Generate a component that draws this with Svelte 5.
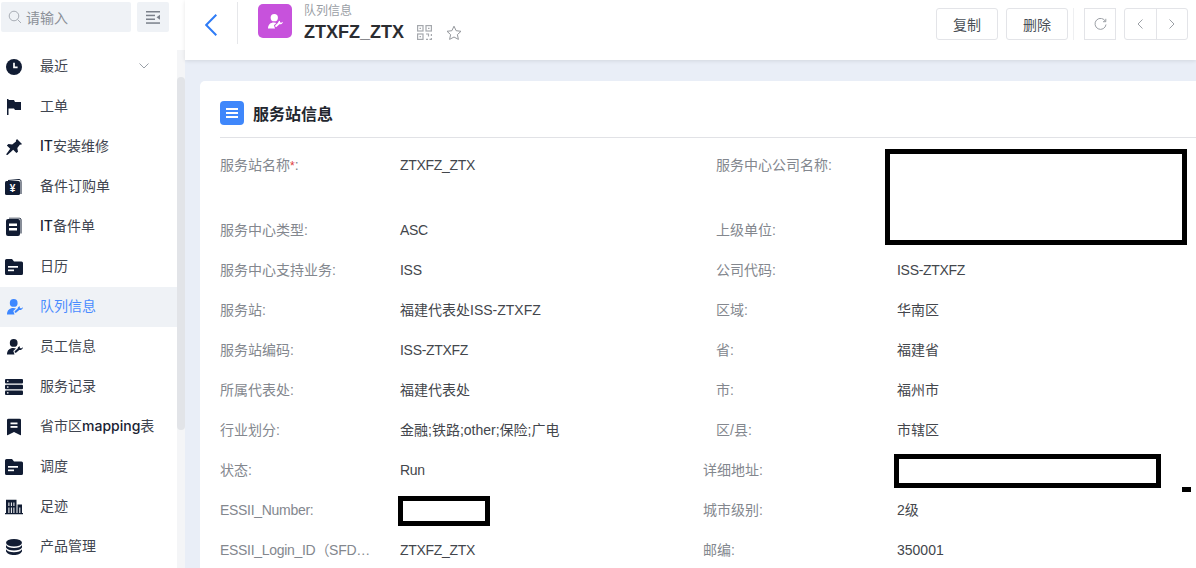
<script>
  const menu = [
    { label: '最近', icon: 'clock', arrow: true },
    { label: '工单', icon: 'flag' },
    { label: 'IT安装维修', icon: 'pin' },
    { label: '备件订购单', icon: 'yen' },
    { label: 'IT备件单', icon: 'book' },
    { label: '日历', icon: 'folder' },
    { label: '队列信息', icon: 'user', active: true },
    { label: '员工信息', icon: 'user' },
    { label: '服务记录', icon: 'server' },
    { label: '省市区mapping表', icon: 'bookmark' },
    { label: '调度', icon: 'folder' },
    { label: '足迹', icon: 'city' },
    { label: '产品管理', icon: 'db' }
  ];

  const rows = [
    { tall: true, l: '服务站名称', req: true, v: 'ZTXFZ_ZTX', r: '服务中心公司名称', rv: '' },
    { l: '服务中心类型', v: 'ASC', r: '上级单位', rv: '' },
    { l: '服务中心支持业务', v: 'ISS', r: '公司代码', rv: 'ISS-ZTXFZ' },
    { l: '服务站', v: '福建代表处ISS-ZTXFZ', r: '区域', rv: '华南区' },
    { l: '服务站编码', v: 'ISS-ZTXFZ', r: '省', rv: '福建省' },
    { l: '所属代表处', v: '福建代表处', r: '市', rv: '福州市' },
    { l: '行业划分', v: '金融;铁路;other;保险;广电', r: '区/县', rv: '市辖区' },
    { l: '状态', v: 'Run', r: '详细地址', rv: '', shift: true },
    { l: 'ESSII_Number', v: '', r: '城市级别', rv: '2级', shift: true },
    { l: 'ESSII_Login_ID（SFD…', plain: true, v: 'ZTXFZ_ZTX', r: '邮编', rv: '350001', shift: true }
  ];

  // latin runs in the menu sit darker than the CJK around them
  const parts = (label) => label.split(/([A-Za-z]+)/).filter(Boolean);
  const isLatin = (text) => /^[A-Za-z]/.test(text);
</script>

{#snippet userIcon(size)}
  <svg width={size} height={size} viewBox="0 0 16 16" fill="currentColor">
    <circle cx="6.700" cy="3.900" r="3.900" />
    <path d="M0 15.500c0-4.300 2.600-6.500 6.300-6.500 1 0 1.900.2 2.700.5L6.300 12l1.200 3.500z" />
    <path d="M16 8.200l-2 1.200-1.200-.7V7.200C11.700 7.300 10.800 8.200 10.700 9.400l-2.800 2.500c-.9.900.3 2.500 1.400 1.700l2.900-2.600c1.900.3 3.500-.8 3.800-2.800z" />
  </svg>
{/snippet}

{#snippet menuIcon(name)}
  {#if name === 'clock'}
    <svg width="16" height="16" viewBox="0 0 16 16"><circle cx="8" cy="8" r="8" fill="currentColor" /><path d="M8 3.800V8.400H11.600" fill="none" stroke="#fff" stroke-width="1.700" /></svg>
  {:else if name === 'flag'}
    <svg width="16" height="16" viewBox="0 0 16 16" fill="currentColor"><path d="M1 0h1.500v16H1zM2.500 1H8l1 2h6v8H9l-1-1.500H2.500z" /></svg>
  {:else if name === 'pin'}
    <svg width="17" height="17" viewBox="0 0 17 17" fill="currentColor"><path d="M11.500.5l5 5-1 .8-1-.2-2.700 3.400.7 3.700-1.600 1.400-3.200-3.300L2 16.500l-1.500-.5 4.200-5.700L1.300 7 3 5.400l3.700.7L10.500 3l-.1-1z" /></svg>
  {:else if name === 'yen'}
    <svg width="18" height="16" viewBox="0 0 18 16"><path d="M3 1.500 14 .5c1.500 0 2 .8 2 2V15" fill="none" stroke="currentColor" /><rect x="0" y="2" width="15" height="14" rx="1.500" fill="currentColor" /><text x="7.500" y="12.500" font-size="10" font-weight="700" font-family="Liberation Sans" fill="#fff" text-anchor="middle">¥</text></svg>
  {:else if name === 'book'}
    <svg width="16" height="19" viewBox="0 0 16 19"><path d="M3 .5h10c1.500 0 2 .8 2 2V16" fill="none" stroke="currentColor" /><rect x="0" y="1.500" width="14" height="17" rx="2" fill="currentColor" /><rect x="3" y="6" width="8" height="2.500" fill="#fff" /><rect x="3" y="10.500" width="8" height="2.500" fill="#fff" /></svg>
  {:else if name === 'folder'}
    <svg width="18" height="16" viewBox="0 0 18 16"><path d="M1.500 0H7l2 2.500h7.500A1.500 1.500 0 0 1 18 4v10.500a1.500 1.500 0 0 1-1.500 1.500h-15A1.500 1.500 0 0 1 0 14.500v-13A1.500 1.500 0 0 1 1.500 0z" fill="currentColor" /><rect x="3" y="7" width="10" height="1.700" fill="#fff" /><rect x="3" y="10.500" width="6" height="1.700" fill="#fff" /></svg>
  {:else if name === 'user'}
    {@render userIcon(16)}
  {:else if name === 'server'}
    <svg width="18" height="16" viewBox="0 0 18 16" fill="currentColor"><rect width="18" height="4.400" rx="1" /><rect y="5.800" width="18" height="4.400" rx="1" /><rect y="11.600" width="18" height="4.400" rx="1" /><g fill="#fff"><rect x="2" y="1.600" width="1.500" height="1.300" /><rect x="2" y="7.400" width="1.500" height="1.300" /><rect x="2" y="13.200" width="1.500" height="1.300" /></g></svg>
  {:else if name === 'bookmark'}
    <svg width="14" height="17" viewBox="0 0 14 17"><path d="M1.500 0h11A1.500 1.500 0 0 1 14 1.500V17l-7-3.500L0 17V1.500A1.500 1.500 0 0 1 1.500 0z" fill="currentColor" /><rect x="3.500" y="4" width="7" height="1.800" fill="#fff" /><rect x="3.500" y="7.500" width="7" height="1.800" fill="#fff" /></svg>
  {:else if name === 'city'}
    <svg width="18" height="15" viewBox="0 0 18 15"><path d="M1 0h10.500v14H1zM12.500 5H17v9h-4.500z" fill="currentColor" /><rect y="13.500" width="18" height="1.500" fill="currentColor" /><g fill="#fff"><rect x="3.400" y="3" width="1" height="3.500" /><rect x="5.900" y="3" width="1" height="3.500" /><rect x="8.400" y="3" width="1" height="3.500" /><rect x="3.400" y="8" width="1" height="5.500" /><rect x="5.900" y="8" width="1" height="5.500" /><rect x="8.400" y="8" width="1" height="5.500" /><rect x="14.300" y="8" width="1" height="5.500" /></g></svg>
  {:else if name === 'db'}
    <svg width="16" height="16" viewBox="0 0 16 16" fill="currentColor"><ellipse cx="8" cy="3.800" rx="8" ry="3.800" /><path d="M0 6c1 2 4 3 8 3s7-1 8-3v2.400c-.8 2-4 3-8 3s-7.200-1-8-3z" /><path d="M0 10.300c1 2 4 3 8 3s7-1 8-3v2c-.8 2.300-4 3.700-8 3.700s-7.200-1.400-8-3.700z" /></svg>
  {/if}
{/snippet}

<div class="page">
  <aside class="sidebar">
    <div class="search-row">
      <div class="search">
        <svg width="14" height="14" viewBox="0 0 14 14" fill="none" stroke="#a8adb5"><circle cx="6" cy="6" r="4.800" /><path d="M9.500 9.500l3.500 3.500" /></svg>
        <span>请输入</span>
      </div>
      <button class="collapse" aria-label="收起">
        <svg width="14" height="13" viewBox="0 0 14 13" fill="#7b808a"><rect width="14" height="1.500" /><rect y="3.700" width="9" height="1.500" /><rect y="7.500" width="9" height="1.500" /><rect y="11.300" width="14" height="1.500" /><path d="M14 3.800v5L10.500 6.300z" /></svg>
      </button>
    </div>
    <div class="menu-wrap">
      <nav class="menu">
        {#each menu as item}
          <div class="item" class:active={item.active}>
            <span class="icon" class:nudge={item.icon === 'user'}>{@render menuIcon(item.icon)}</span>
            <span class="label">
              {#each parts(item.label) as part}{#if isLatin(part)}<b>{part}</b>{:else}{part}{/if}{/each}
            </span>
            {#if item.arrow}
              <svg class="arrow" width="10" height="6" viewBox="0 0 10 6" fill="none" stroke="#9aa0a8"><path d="M.5.500 5 5 9.500.500" /></svg>
            {/if}
          </div>
        {/each}
      </nav>
      <div class="scrollbar"><div class="thumb"></div></div>
    </div>
  </aside>

  <main class="main">
    <header class="topbar">
      <button class="back" aria-label="返回">
        <svg width="12" height="22" viewBox="0 0 12 22" fill="none" stroke="#2f7cf6" stroke-width="2"><path d="M11.300 .7 1.200 11l10.100 10.300" /></svg>
      </button>
      <div class="divider"></div>
      <div class="app-icon">{@render userIcon(15)}</div>
      <div class="titles">
        <div class="crumb">队列信息</div>
        <div class="title-row">
          <span class="title">ZTXFZ_ZTX</span>
          <svg class="qr" width="15" height="15" viewBox="0 0 15 15" fill="none" stroke="#a5a8ad" stroke-width="1.200"><rect x=".6" y=".6" width="5.400" height="5.400" /><rect x="9" y=".6" width="5.400" height="5.400" /><rect x=".6" y="9" width="5.400" height="5.400" /><path d="M2.500 3.300h1.500M11 3.300h1.500M2.500 11.700h1.500M9 9h2.500v2.500M14.400 9v2M9 14.400h2M12.500 14.400h2V13" /></svg>
          <svg class="star" width="16" height="16" viewBox="0 0 16 16" fill="none" stroke="#94979c"><path d="M8 1.200l2.100 4.500 4.900.6-3.600 3.300 1 4.800L8 12l-4.400 2.400 1-4.800L1 6.300l4.900-.6z" /></svg>
        </div>
      </div>
      <div class="actions">
        <button class="btn">复制</button>
        <button class="btn">删除</button>
        <div class="sep"></div>
        <button class="square" aria-label="刷新">
          <svg width="13" height="13" viewBox="0 0 13 13" fill="none" stroke="#9ca0a6"><path d="M11.500 3.500A5.500 5.500 0 1 0 12 6.500M11.800 .8v2.900H9" /></svg>
        </button>
        <div class="pager">
          <button aria-label="上一个"><svg width="6" height="10" viewBox="0 0 6 10" fill="none" stroke="#9ca0a6"><path d="M5.500.500 1 5l4.500 4.500" /></svg></button>
          <button aria-label="下一个"><svg width="6" height="10" viewBox="0 0 6 10" fill="none" stroke="#9ca0a6"><path d="M.5.500 5 5 .5 9.500" /></svg></button>
        </div>
      </div>
    </header>

    <section class="card">
      <div class="card-head">
        <span class="head-icon"><svg width="12" height="10" viewBox="0 0 12 10" fill="#fff"><rect width="12" height="2" /><rect y="4" width="12" height="2" /><rect y="8" width="12" height="2" /></svg></span>
        <h2>服务站信息</h2>
      </div>
      <div class="form">
        {#each rows as row}
          <div class="row" class:tall={row.tall}>
            <div class="key" class:latin={isLatin(row.l)}>{row.l}{#if row.req}<i>*</i>{/if}{#if !row.plain}:{/if}</div>
            <div class="val" class:latin={isLatin(row.v)}>{row.v}</div>
            <div class="key" class:shift={row.shift}>{row.r}:</div>
            <div class="val" class:latin={isLatin(row.rv)}>{row.rv}</div>
          </div>
        {/each}
      </div>
    </section>
  </main>

  <div class="mask mask-company"></div>
  <div class="mask mask-address"></div>
  <div class="mask mask-number"></div>
  <div class="mask-dot"></div>
</div>

<style>
  :global(body) {
    margin: 0;
    overflow: hidden;
  }

  .page {
    position: relative;
    display: flex;
    width: 1196px;
    height: 568px;
    overflow: hidden;
    background: #e9eef7;
    font-family: "Liberation Sans", "Noto Sans CJK SC", sans-serif;
    color: #4a4f57;
  }

  button {
    padding: 0;
    background: #fff;
    font: inherit;
    color: inherit;
  }

  .sidebar {
    flex: 0 0 185px;
    background: #fff;
    display: flex;
    flex-direction: column;
  }

  .search-row {
    display: flex;
    gap: 6px;
    height: 50px;
    padding: 2px 0 0 1px;
    box-sizing: border-box;
  }

  .search {
    width: 130px;
    height: 30px;
    background: #eff2f6;
    border-radius: 2px;
    display: flex;
    align-items: center;
    gap: 4px;
    padding-left: 7px;
    box-sizing: border-box;
    font-size: 14px;
    color: #8b9098;
  }

  .collapse {
    width: 32px;
    height: 30px;
    border: 0;
    border-radius: 2px;
    background: #eff2f6;
    display: flex;
    align-items: center;
    justify-content: center;
  }

  .menu-wrap {
    flex: 1;
    display: flex;
    min-height: 0;
  }

  .menu {
    width: 177px;
    flex: none;
    overflow: hidden;
  }

  .item {
    position: relative;
    display: flex;
    align-items: center;
    height: 40px;
    margin-top: -3px;
    margin-bottom: 3px;
    padding: 0 0 4px 40px;
    box-sizing: border-box;
    font-size: 14px;
    color: #3f4550;
  }

  .label b {
    font-family: "Inter", sans-serif;
    font-weight: 500;
    color: #1a2333;
  }

  .item.active {
    background: #eff2f6;
    color: #4a8cff;
  }

  .icon {
    position: absolute;
    left: 14px;
    top: 50%;
    transform: translate(-50%, -50%);
    display: flex;
    color: #111c33;
  }

  .icon.nudge {
    left: 15px;
  }

  .active .icon {
    color: #3d87ff;
  }

  .arrow {
    position: absolute;
    left: 139px;
    top: 16px;
  }

  .scrollbar {
    width: 8px;
    background: #f4f5f7;
  }

  .thumb {
    margin-top: 27px;
    height: 353px;
    background: #e2e4e8;
    border-radius: 4px;
  }

  .main {
    flex: 1;
    min-width: 0;
    display: flex;
    flex-direction: column;
  }

  .topbar {
    flex: 0 0 60px;
    display: flex;
    align-items: center;
    background: #fff;
    box-shadow: 0 1px 4px rgba(0, 0, 0, 0.1);
    position: relative;
    padding-right: 8px;
    box-sizing: border-box;
  }

  .back {
    border: 0;
    width: 12px;
    height: 22px;
    margin: 0 0 10px 20px;
    display: flex;
  }

  .divider {
    width: 1px;
    height: 42px;
    background: #e6e7ea;
    margin: 0 20px 15px 20px;
  }

  .app-icon {
    width: 34px;
    height: 34px;
    border-radius: 5px;
    background: #c752dc;
    color: #fff;
    display: flex;
    align-items: center;
    justify-content: center;
    margin: 0 12px 18px 0;
  }

  .titles {
    flex: 1;
    margin-bottom: 9px;
  }

  .crumb {
    font-size: 12px;
    line-height: 16px;
    color: #9a9ea5;
    margin-top: -5px;
  }

  .title-row {
    display: flex;
    align-items: center;
    margin-top: 3px;
    height: 22px;
  }

  .title {
    font-size: 18px;
    font-weight: 700;
    color: #2b2d31;
  }

  .qr {
    margin-left: 13px;
  }

  .star {
    margin-left: 14px;
  }

  .actions {
    display: flex;
    align-items: center;
    margin-bottom: 12px;
  }

  .btn {
    width: 62px;
    height: 32px;
    border: 1px solid #e3e4e8;
    border-radius: 3px;
    font-size: 14px;
    color: #4a4f57;
    margin-right: 8px;
  }

  .sep {
    width: 1px;
    height: 32px;
    background: #eeeff1;
    margin: 0 10px 0 -3px;
  }

  .square {
    width: 32px;
    height: 32px;
    border: 1px solid #e3e4e8;
    display: flex;
    align-items: center;
    justify-content: center;
    margin-right: 8px;
  }

  .pager {
    display: flex;
    width: 64px;
    height: 32px;
    border: 1px solid #e3e4e8;
    border-radius: 3px;
    box-sizing: border-box;
  }

  .pager button {
    flex: 1;
    border: 0;
    display: flex;
    align-items: center;
    justify-content: center;
    background: transparent;
  }

  .pager button + button {
    border-left: 1px solid #e3e4e8;
  }

  .card {
    flex: 1;
    margin: 21px 0 0 15px;
    background: #fff;
    border-radius: 5px 0 0 0;
    padding: 0 0 0 20px;
  }

  .card-head {
    display: flex;
    align-items: center;
    gap: 9px;
    height: 57px;
    padding-top: 7px;
    box-sizing: border-box;
    border-bottom: 1px solid #e1e2e6;
  }

  .head-icon {
    width: 24px;
    height: 24px;
    border-radius: 4px;
    background: #3f87fb;
    display: flex;
    align-items: center;
    justify-content: center;
  }

  h2 {
    margin: 0;
    font-size: 16px;
    font-weight: 700;
    color: #23272f;
  }

  .form {
    padding-top: 8px;
  }

  .row {
    display: grid;
    grid-template-columns: 180px 316px 181px 1fr;
    height: 40px;
    align-items: center;
    font-size: 14px;
    line-height: 20px;
    color: #43464c;
  }

  .row.tall {
    height: 64px;
    align-items: start;
    padding-top: 9px;
    box-sizing: border-box;
  }

  .key {
    color: #83878e;
    padding-bottom: 1px;
  }

  .latin {
    letter-spacing: -0.3px;
  }

  .key.shift {
    margin-left: -13px;
  }

  .key i {
    font-style: normal;
    font-size: 12px;
    color: #e03a3a;
  }

  .mask {
    position: absolute;
    box-sizing: border-box;
    border: 5px solid #000;
    background: #fff;
  }

  .mask-company {
    left: 885px;
    top: 149px;
    width: 302px;
    height: 96px;
  }

  .mask-address {
    left: 894px;
    top: 454px;
    width: 267px;
    height: 34px;
  }

  .mask-number {
    left: 398px;
    top: 496px;
    width: 92px;
    height: 30px;
  }

  .mask-dot {
    position: absolute;
    left: 1182px;
    top: 487px;
    width: 9px;
    height: 5px;
    background: #000;
  }
</style>
